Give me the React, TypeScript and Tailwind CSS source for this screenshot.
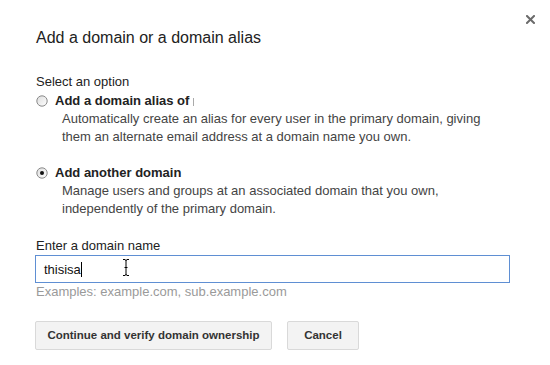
import React from "react";

function Radio({ checked }: { checked?: boolean }) {
  return (
    <svg width="12" height="12" viewBox="0 0 12 12" className="shrink-0">
      <defs>
        <linearGradient id={checked ? "rg1" : "rg0"} x1="0" y1="0" x2="1" y2="1">
          <stop offset="0" stopColor="#dcdcdc" />
          <stop offset="1" stopColor="#ffffff" />
        </linearGradient>
      </defs>
      <circle cx="6" cy="6" r="5.2" fill={`url(#${checked ? "rg1" : "rg0"})`} stroke="#8a8a8a" strokeWidth="1" />
      {checked && <circle cx="6" cy="6" r="2" fill="#111" />}
    </svg>
  );
}

export default function App() {
  return (
    <div
      className="relative w-[550px] h-[365px] bg-white overflow-hidden text-[#222]"
      style={{ fontFamily: '"Liberation Sans", Arial, sans-serif' }}
    >
      <button className="absolute top-[15px] right-[15px] w-[9px] h-[9px]" aria-label="Close">
        <svg width="9" height="9" viewBox="0 0 9 9">
          <path d="M1 1 L8 8 M8 1 L1 8" stroke="#6b6b6b" strokeWidth="2" strokeLinecap="square" />
        </svg>
      </button>

      <div className="pl-[36px] pt-[28px] flex flex-col">
        <div className="text-[16px] leading-[20px] text-[#222]">Add a domain or a domain alias</div>

        <div className="mt-[26px] text-[13px] leading-[16px] text-[#222]">Select an option</div>

        <div className="mt-[2px] flex flex-col">
          <div className="flex items-center h-[18px]">
            <Radio />
            <span className="ml-[7px] text-[13px] font-bold leading-[18px] text-[#222]">Add a domain alias of</span>
            <span className="ml-[4px] inline-block w-[1px] h-[8px] bg-[#aaa] mt-[2px]" />
          </div>
          <div className="pl-[26px] text-[13px] leading-[18px] text-[#444]">
            <div>Automatically create an alias for every user in the primary domain, giving</div>
            <div>them an alternate email address at a domain name you own.</div>
          </div>
        </div>

        <div className="mt-[18px] flex flex-col">
          <div className="flex items-center h-[18px]">
            <Radio checked />
            <span className="ml-[7px] text-[13px] font-bold leading-[18px] text-[#222]">Add another domain</span>
          </div>
          <div className="pl-[26px] text-[13px] leading-[18px] text-[#444]">
            <div>Manage users and groups at an associated domain that you own,</div>
            <div>independently of the primary domain.</div>
          </div>
        </div>

        <div className="mt-[20px] text-[13px] leading-[16px] text-[#222]">Enter a domain name</div>

        <div className="relative mt-[1px] -ml-[1px] w-[475px] h-[28px] border border-[#5f8fd3] bg-white flex items-center pl-[8px] pt-[1px]">
          <span className="text-[13px] leading-[16px] text-[#111]">thisisa</span>
          <span className="inline-block w-[1px] h-[15px] bg-black" />
          <svg
            className="absolute left-[86px] top-[3px]"
            width="8"
            height="17"
            viewBox="0 0 8 17"
          >
            <path d="M1 0.5 H3 M5 0.5 H7 M3 0.5 Q4 1 4 2 V15 Q4 16 3 16.5 M5 0.5 Q4 1 4 2 M5 16.5 Q4 16 4 15 M1 16.5 H3 M5 16.5 H7 M2.5 8.5 H5.5" stroke="#000" strokeWidth="1" fill="none" />
          </svg>
        </div>

        <div className="mt-[1px] text-[13px] leading-[16px] text-[#9a9a9a]">Examples: example.com, sub.example.com</div>

        <div className="mt-[21px] flex items-center -ml-[1px]">
          <button className="h-[29px] w-[237px] rounded-[2px] border border-[#d9d9d9] bg-[#f3f3f3] text-[11.5px] font-bold text-[#333]">
            Continue and verify domain ownership
          </button>
          <button className="ml-[15px] h-[29px] w-[72px] rounded-[2px] border border-[#d9d9d9] bg-[#f3f3f3] text-[11.5px] font-bold text-[#333]">
            Cancel
          </button>
        </div>
      </div>
    </div>
  );
}
